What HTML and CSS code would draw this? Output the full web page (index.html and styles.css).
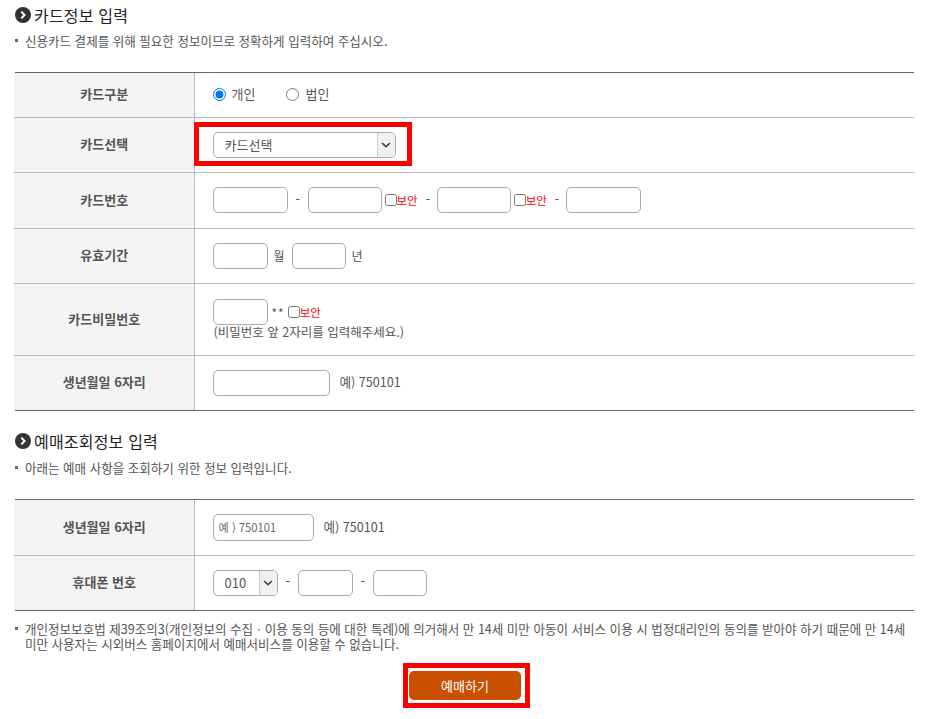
FILE: index.html
```html
<!DOCTYPE html>
<html lang="ko">
<head>
<meta charset="utf-8">
<title>예매</title>
<link rel="stylesheet" href="styles.css">
</head>
<body>
<main class="page">
  <h2 class="heading"><svg class="bullet" viewBox="0 0 16 16" width="16" height="16"><circle cx="8" cy="8" r="8" fill="#333"/><path d="M6.3 4.6 9.6 8l-3.3 3.4" fill="none" stroke="#fff" stroke-width="2"/></svg>카드정보 입력</h2>
  <p class="note"><span class="dot"></span>신용카드 결제를 위해 필요한 정보이므로 정확하게 입력하여 주십시오.</p>
  <div class="form-wrap">
  <table class="form">
    <tr class="r44">
      <th>카드구분</th>
      <td><div class="line">
        <label class="radio"><input type="radio" name="kind" checked>개인</label>
        <label class="radio"><input type="radio" name="kind">법인</label>
      </div></td>
    </tr>
    <tr class="r55">
      <th>카드선택</th>
      <td><div class="line">
        <span class="select w183"><select><option>카드선택</option></select><span class="arrow"><svg viewBox="0 0 10 6" width="10" height="6"><path d="M1 1l4 3.6L9 1" fill="none" stroke="#444" stroke-width="1.6"/></svg></span></span>
        <span class="mark-select"></span>
      </div></td>
    </tr>
    <tr class="r56">
      <th>카드번호</th>
      <td><div class="line">
        <input class="box w75" type="text"><span class="dash d1">-</span>
        <input class="box w74" type="text"><label class="secure"><input type="checkbox"><b>보안</b></label><span class="dash d2">-</span>
        <input class="box w74" type="text"><label class="secure"><input type="checkbox"><b>보안</b></label><span class="dash d2">-</span>
        <input class="box w75" type="text">
      </div></td>
    </tr>
    <tr class="r55">
      <th>유효기간</th>
      <td><div class="line">
        <input class="box w55" type="text"><span class="unit">월</span>
        <input class="box w54" type="text"><span class="unit">년</span>
      </div></td>
    </tr>
    <tr class="r72">
      <th>카드비밀번호</th>
      <td><div class="line">
        <input class="box w55" type="text"><span class="stars">**</span><label class="secure"><input type="checkbox"><b>보안</b></label>
      </div>
      <div class="hint">(비밀번호 앞 2자리를 입력해주세요.)</div></td>
    </tr>
    <tr class="r55 last">
      <th>생년월일 6자리</th>
      <td><div class="line">
        <input class="box w117" type="text"><span class="example">예) 750101</span>
      </div></td>
    </tr>
  </table>
  </div>

  <h2 class="heading second"><svg class="bullet" viewBox="0 0 16 16" width="16" height="16"><circle cx="8" cy="8" r="8" fill="#333"/><path d="M6.3 4.6 9.6 8l-3.3 3.4" fill="none" stroke="#fff" stroke-width="2"/></svg>예매조회정보 입력</h2>
  <p class="note"><span class="dot"></span>아래는 예매 사항을 조회하기 위한 정보 입력입니다.</p>
  <div class="form-wrap">
  <table class="form">
    <tr class="r55">
      <th>생년월일 6자리</th>
      <td><div class="line">
        <input class="box w101 tall" type="text" placeholder="예 ) 750101"><span class="example">예) 750101</span>
      </div></td>
    </tr>
    <tr class="r55 last">
      <th>휴대폰 번호</th>
      <td><div class="line">
        <span class="select w65"><select><option>010</option></select><span class="arrow"><svg viewBox="0 0 10 6" width="10" height="6"><path d="M1 1l4 3.6L9 1" fill="none" stroke="#444" stroke-width="1.6"/></svg></span></span><span class="dash d1">-</span>
        <input class="box w55" type="text"><span class="dash d1">-</span>
        <input class="box w54" type="text">
      </div></td>
    </tr>
  </table>
  </div>
  <p class="note legal"><span class="dot"></span>개인정보보호법 제39조의3(개인정보의 수집ㆍ이용 동의 등에 대한 특례)에 의거해서 만 14세 미만 아동이 서비스 이용 시 법정대리인의 동의를 받아야 하기 때문에 만 14세 미만 사용자는 시외버스 홈페이지에서 예매서비스를 이용할 수 없습니다.</p>
  <div class="actions">
    <span class="mark-wrap"><button class="submit" type="button">예매하기</button></span>
  </div>
</main>
</body>
</html>
```

FILE: styles.css
```css
* { box-sizing: border-box; }
html, body { margin: 0; padding: 0; background: #fff; }
body {
  font-family: "Noto Sans CJK KR", "Noto Sans", sans-serif;
  font-size: 13px;
  color: #555;
  overflow: hidden;
}
.page { width: 934px; height: 719px; padding: 5px 20px 0 14px; }
.heading {
  display: flex;
  align-items: center;
  gap: 3px;
  margin: 0 0 0 1px;
  height: 20px;
  font-size: 16px;
  letter-spacing: .2px;
  font-weight: 400;
  color: #222;
  white-space: nowrap;
}
.heading.second { margin-top: 20px; }
.heading.second + .note { margin-top: 9px; }
.bullet { flex: none; }
.note {
  position: relative;
  margin: 8px 0 0 1px;
  padding-left: 10px;
  font-size: 12.54px;
  line-height: 16px;
  color: #555;
}
.dot {
  position: absolute;
  left: 0;
  top: 6px;
  width: 3px;
  height: 3px;
  background: #666;
}
.form-wrap { margin-top: 23px; }
.form-wrap::before,
.form-wrap::after {
  content: "";
  display: block;
  height: 1px;
  margin-left: 1px;
  background: #666;
}
.form {
  width: 900px;
  border-collapse: collapse;
  table-layout: fixed;
}
.form th {
  width: 180px;
  padding: 0 0 2px 1px;
  background: #f4f4f4;
  border-right: 1px solid #bbb;
  font-size: 13px;
  font-weight: 700;
  color: #555;
  text-align: center;
}
.form td { padding: 0 0 0 18px; }
.form tr { border-bottom: 1px solid #bbb; }
.form tr.last { border-bottom: 0; }
.r44 { height: 44px; }
.r55 { height: 55px; }
.r56 { height: 56px; }
.r72 { height: 72px; }
.line { position: relative; display: flex; align-items: center; }
.radio { display: flex; align-items: center; margin-right: 31px; padding-bottom: 2px; font-size: 13px; }
.radio input { width: 13px; height: 13px; margin: 2px 6px 0 0; accent-color: #0075ff; }
.box {
  height: 26px;
  padding: 0 5px;
  border: 1px solid #aaa;
  border-radius: 5px;
  background: #fff;
  font: 11.2px "Noto Sans CJK KR", sans-serif;
  color: #555;
}
.box.tall { height: 27px; }
.box::placeholder { color: #666; opacity: 1; }
.w54 { width: 54px; }
.w55 { width: 55px; }
.w74 { width: 74px; }
.w75 { width: 75px; }
.w101 { width: 101px; }
.w117 { width: 117px; }
.w65 { width: 65px; }
.w183 { width: 183px; }
.select { position: relative; display: block; height: 26px; }
.select select {
  display: block;
  width: 100%;
  height: 100%;
  padding: 0 11px;
  appearance: none;
  border: 1px solid #aaa;
  border-radius: 5px;
  background: #fff;
  font: 13px "Noto Sans CJK KR", sans-serif;
  color: #555;
}
.arrow {
  position: absolute;
  top: 1px;
  right: 1px;
  bottom: 1px;
  width: 18px;
  display: flex;
  align-items: center;
  justify-content: center;
  background: #f0f0f0;
  border-left: 1px solid #ccc;
  border-radius: 0 4px 4px 0;
  pointer-events: none;
}
.dash { width: 4px; color: #555; font-size: 13px; line-height: 1; margin-bottom: 4px; }
.d1 { margin-left: 8px; margin-right: 8px; }
.d2 { margin-left: 8px; margin-right: 7px; }
.secure { display: flex; align-items: center; margin-left: 3px; }
.secure input { width: 12px; height: 12px; margin: 0; }
.secure b { font-weight: 400; color: #f00; font-size: 11.5px; margin-bottom: 1px; }
.unit { margin: 0 7px 0 6px; font-size: 12px; }
.stars { margin-left: 4px; font-size: 12px; letter-spacing: 1px; }
.hint { font-size: 12.5px; line-height: 15px; margin-top: -1px; padding-left: 1px; }
.example { margin: -2px 0 0 10px; font-size: 12.6px; }
.legal { margin-top: 10px; line-height: 15px; }
.actions { display: flex; justify-content: center; margin-top: 12px; padding-left: 5px; }
.mark-wrap { display: block; padding: 3px 4px 3px 1px; border: 5px solid #f00; }
.submit {
  display: block;
  width: 112px;
  height: 29px;
  border: 0;
  border-radius: 5px;
  background: #c85000;
  color: #fff;
  font: 13px "Noto Sans CJK KR", sans-serif;
}
.mark-select {
  position: absolute;
  left: -19px;
  top: -10px;
  width: 218px;
  height: 44px;
  border: 5px solid #f00;
  pointer-events: none;
}
```
